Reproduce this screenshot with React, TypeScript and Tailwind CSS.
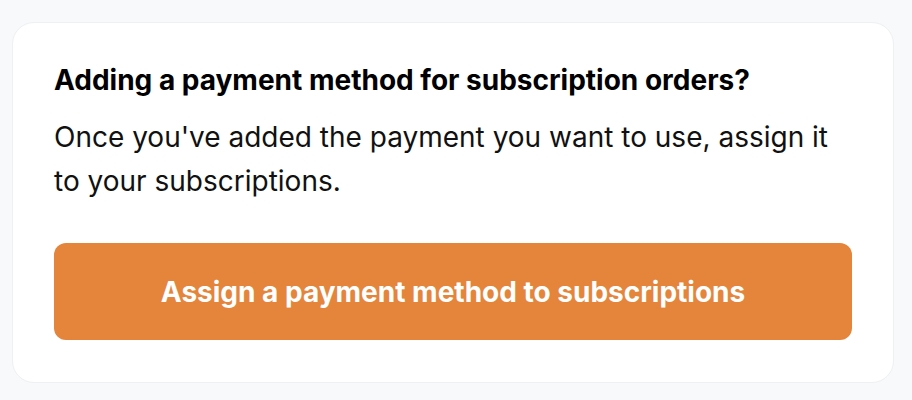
export default function App() {
  return (
    <div className="min-h-[400px] bg-[#f8f9fb] pl-3 pr-[18px] pt-[22px] pb-[17px] font-['Inter',sans-serif]">
      <div className="rounded-[22px] border border-[#eef0f3] bg-white px-[41px] pt-[39px] pb-[42px]">
        <h2 className="text-[28px] font-bold leading-[36px] text-black">
          Adding a payment method for subscription orders?
        </h2>
        <p className="mt-[17px] text-[28px] leading-[44px] text-[#111]">
          Once you've added the payment you want to use, assign it to your subscriptions.
        </p>
        <button className="mt-[40px] flex h-[97px] w-full items-center justify-center rounded-[12px] bg-[#e5843b] text-[28px] font-bold text-white">
          Assign a payment method to subscriptions
        </button>
      </div>
    </div>
  );
}
